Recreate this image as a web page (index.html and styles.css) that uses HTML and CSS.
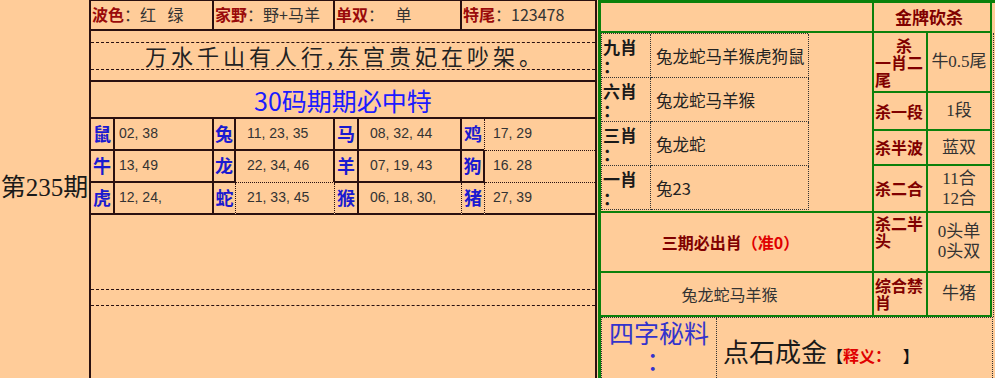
FILE: index.html
```html
<!DOCTYPE html>
<html lang="zh">
<head>
<meta charset="utf-8">
<title>第235期</title>
<link rel="stylesheet" href="styles.css">
</head>
<body>
<div class="page">
  <div class="period">第235期</div>

  <div class="mid">
    <div class="info">
      <div class="cell"><b>波色</b>：红&ensp;&nbsp;绿</div>
      <div class="cell"><b>家野</b>：野+马羊</div>
      <div class="cell"><b>单双</b>：&ensp;&nbsp;单</div>
      <div class="cell"><b>特尾</b>：123478</div>
    </div>
    <div class="poem-row"><div class="poem">万水千山有人行,东宫贵妃在吵架。</div></div>
    <div class="title">30码期期必中特</div>
    <div class="zodiac">
      <div class="zl">鼠</div><div class="zn">02, 38</div>
      <div class="zl">兔</div><div class="zn">11, 23, 35</div>
      <div class="zl">马</div><div class="zn">08, 32, 44</div>
      <div class="zl dr">鸡</div><div class="zn db">17, 29</div>

      <div class="zl">牛</div><div class="zn">13, 49</div>
      <div class="zl">龙</div><div class="zn db">22, 34, 46</div>
      <div class="zl">羊</div><div class="zn">07, 19, 43</div>
      <div class="zl">狗</div><div class="zn db">16. 28</div>

      <div class="zl">虎</div><div class="zn">12, 24,</div>
      <div class="zl dr">蛇</div><div class="zn dr">21, 33, 45</div>
      <div class="zl">猴</div><div class="zn dr">06, 18, 30,</div>
      <div class="zl dr">猪</div><div class="zn">27, 39</div>
    </div>
    <div class="blank"><div class="band"></div></div>
  </div>

  <div class="right">
    <div class="g"></div>
    <div class="g head">金牌砍杀</div>
    <div class="edge-top"></div>

    <div class="g xiao-cell">
      <div class="xiao">
        <div class="xl">九肖：</div><div class="xv">兔龙蛇马羊猴虎狗鼠</div>
        <div class="xl">六肖：</div><div class="xv">兔龙蛇马羊猴</div>
        <div class="xl">三肖：</div><div class="xv">兔龙蛇</div>
        <div class="xl">一肖：</div><div class="xv">兔23</div>
      </div>
    </div>
    <div class="g kl"><span class="indent">杀一肖二尾</span></div><div class="g kv">牛0.5尾</div>
    <div class="edge"></div>

    <div class="g kl"><span>杀一段</span></div><div class="g kv">1段</div>
    <div class="g kl"><span>杀半波</span></div><div class="g kv">蓝双</div>
    <div class="g kl"><span>杀二合</span></div><div class="g kv"><span>11合<br>12合</span></div>

    <div class="g sanqi">三期必出肖<span class="red">（准0）</span></div>
    <div class="g kl top"><span>杀二半头</span></div><div class="g kv"><span>0头单<br>0头双</span></div>

    <div class="g tulong">兔龙蛇马羊猴</div>
    <div class="g kl"><span>综合禁肖</span></div><div class="g kv">牛猪</div>

    <div class="bottom">
      <div class="bl">四字秘料：</div>
      <div class="bc"><span class="gold">点石成金</span><span class="note">【<span class="red">释义：</span>&ensp;&nbsp;】</span></div>
    </div>
  </div>
</div>
</body>
</html>
```

FILE: styles.css
```css
* { box-sizing: border-box; }
html, body { margin: 0; padding: 0; }
body {
  width: 995px;
  height: 378px;
  overflow: hidden;
  background: #ffcc99;
  font-family: "Noto Sans CJK SC", "Noto Sans", sans-serif;
  color: #222;
}
.page {
  display: grid;
  grid-template-columns: 89px 508px 398px;
  height: 378px;
}

/* period column */
.period {
  display: flex;
  align-items: center;
  justify-content: center;
  padding-bottom: 8px;
  font-family: "Liberation Serif", "Noto Sans CJK SC", serif;
  font-size: 25px;
  color: #1a1a1a;
  white-space: nowrap;
}

/* middle column */
.mid {
  display: flex;
  flex-direction: column;
  border-left: 2px solid #2a1010;
  border-right: 2px solid #2a1010;
  border-top: 1px solid #2a1010;
}
.info {
  display: grid;
  grid-template-columns: 123px 121px 127px 1fr;
  height: 30px;
  border-bottom: 2px solid #2a1010;
}
.info .cell {
  border-right: 2px solid #2a1010;
  font-size: 16px;
  line-height: 27px;
  padding-left: 1px;
  white-space: nowrap;
  color: #333;
}
.info .cell:last-child { border-right: 0; }
.info b { color: #9a0a0a; font-weight: 700; }

.poem-row {
  height: 51px;
  padding-top: 11px;
  border-bottom: 2px solid #2a1010;
}
.poem {
  height: 28px;
  border-top: 1px dashed #2a1010;
  border-bottom: 1px dashed #2a1010;
  text-align: center;
  font-size: 22px;
  line-height: 25px;
  letter-spacing: 4px;
  padding-left: 4px;
  color: #222;
  white-space: nowrap;
}
.title {
  height: 37px;
  padding-top: 3px;
  border-bottom: 2px solid #2a1010;
  text-align: center;
  font-size: 25px;
  line-height: 31px;
  color: #1c1cff;
}

.zodiac {
  display: grid;
  grid-template-columns: 24px 99px 22px 99px 24px 103px 23px 1fr;
  grid-auto-rows: 32px;
}
.zodiac > div {
  border-right: 2px solid #2a1010;
  border-bottom: 2px solid #2a1010;
  line-height: 29px;
  white-space: nowrap;
}
.zodiac > div:nth-child(8n) { border-right: 0; }
.zl {
  color: #1a1ad0;
  font-weight: 700;
  font-size: 18px;
  text-align: center;
}
.zn {
  font-family: "Liberation Sans", sans-serif;
  font-size: 14px;
  color: #333;
  padding-left: 11px;
}
.zodiac > div:nth-child(8n+2) { padding-left: 4px; }
.zodiac > div:nth-child(8n) { padding-left: 8px; }
.zodiac > .dr { border-right: 1px dotted #2a1010; }
.zodiac > .db { border-bottom: 1px dotted #2a1010; }

.blank {
  flex: 1;
  padding-top: 74px;
}
.band {
  height: 17px;
  border-top: 1px dashed #2a1010;
  border-bottom: 1px dashed #2a1010;
}

/* right column */
.right {
  margin-left: 1px;
  border-left: 3px solid #0b800b;
  border-top: 3px solid #0b800b;
  display: grid;
  grid-template-columns: 273px 54px 64px 1fr;
  grid-template-rows: 30px 60px 38px 35px 47px 60px 44px 1fr;
}
.g {
  border-right: 2px solid #0b800b;
  border-bottom: 2px solid #0b800b;
}
.head {
  grid-column: span 2;
  text-align: center;
  font-weight: 700;
  font-size: 17px;
  line-height: 27px;
  color: #800000;
  padding-right: 6px;
}
.edge {
  grid-row: span 6;
  border-left: 1px dotted #333;
  margin-left: 1px;
}

.xiao-cell { grid-row: span 4; }
.xiao {
  display: grid;
  grid-template-columns: 49px 158px;
  grid-auto-rows: 44px;
  width: 207px;
  border-left: 1px dotted #333;
  border-top: 1px dotted #333;
}
.xiao > div {
  border-right: 1px dotted #333;
  border-bottom: 1px dotted #333;
}
.xl {
  font-weight: 700;
  font-size: 17px;
  line-height: 19px;
  padding: 3px 0 0 1px;
  color: #1a1a1a;
  line-break: anywhere;
}
.xv {
  display: flex;
  align-items: center;
  padding-left: 5px;
  font-size: 16.5px;
  color: #222;
  white-space: nowrap;
}

.kl {
  display: grid;
  align-content: center;
  font-weight: 700;
  font-size: 16px;
  line-height: 17px;
  color: #800000;
  padding-left: 1px;
}
.kl > span { display: block; }
.kl.top { align-content: start; padding-top: 2px; }
.kl .indent { text-indent: 21px; }
.kv {
  display: grid;
  align-content: center;
  justify-content: center;
  text-align: center;
  font-family: "Liberation Serif", "Noto Sans CJK SC", serif;
  font-size: 17px;
  line-height: 20px;
  color: #333;
  white-space: nowrap;
}

.sanqi {
  display: flex;
  align-items: center;
  justify-content: center;
  padding-right: 12px;
  font-weight: 700;
  font-size: 16px;
  color: #800000;
}
.red { color: #e00000; }
.tulong {
  display: flex;
  align-items: center;
  justify-content: center;
  padding-right: 14px;
  font-size: 16px;
  color: #333;
}

.bottom {
  grid-column: 1 / -1;
  display: grid;
  grid-template-columns: 115px 1fr;
  margin-right: 2px;
  border: 1px dotted #333;
  border-bottom: 0;
}
.bl {
  border-right: 1px dotted #333;
  text-align: center;
  font-size: 25px;
  line-height: 27px;
  padding-top: 1px;
  color: #3333cc;
  line-break: anywhere;
}
.bc {
  display: flex;
  align-items: baseline;
  padding-left: 6px;
  padding-top: 14px;
  white-space: nowrap;
}
.gold {
  font-size: 26px;
  color: #1a1a1a;
}
.note {
  font-size: 16px;
  font-weight: 700;
  color: #111;
}
```
